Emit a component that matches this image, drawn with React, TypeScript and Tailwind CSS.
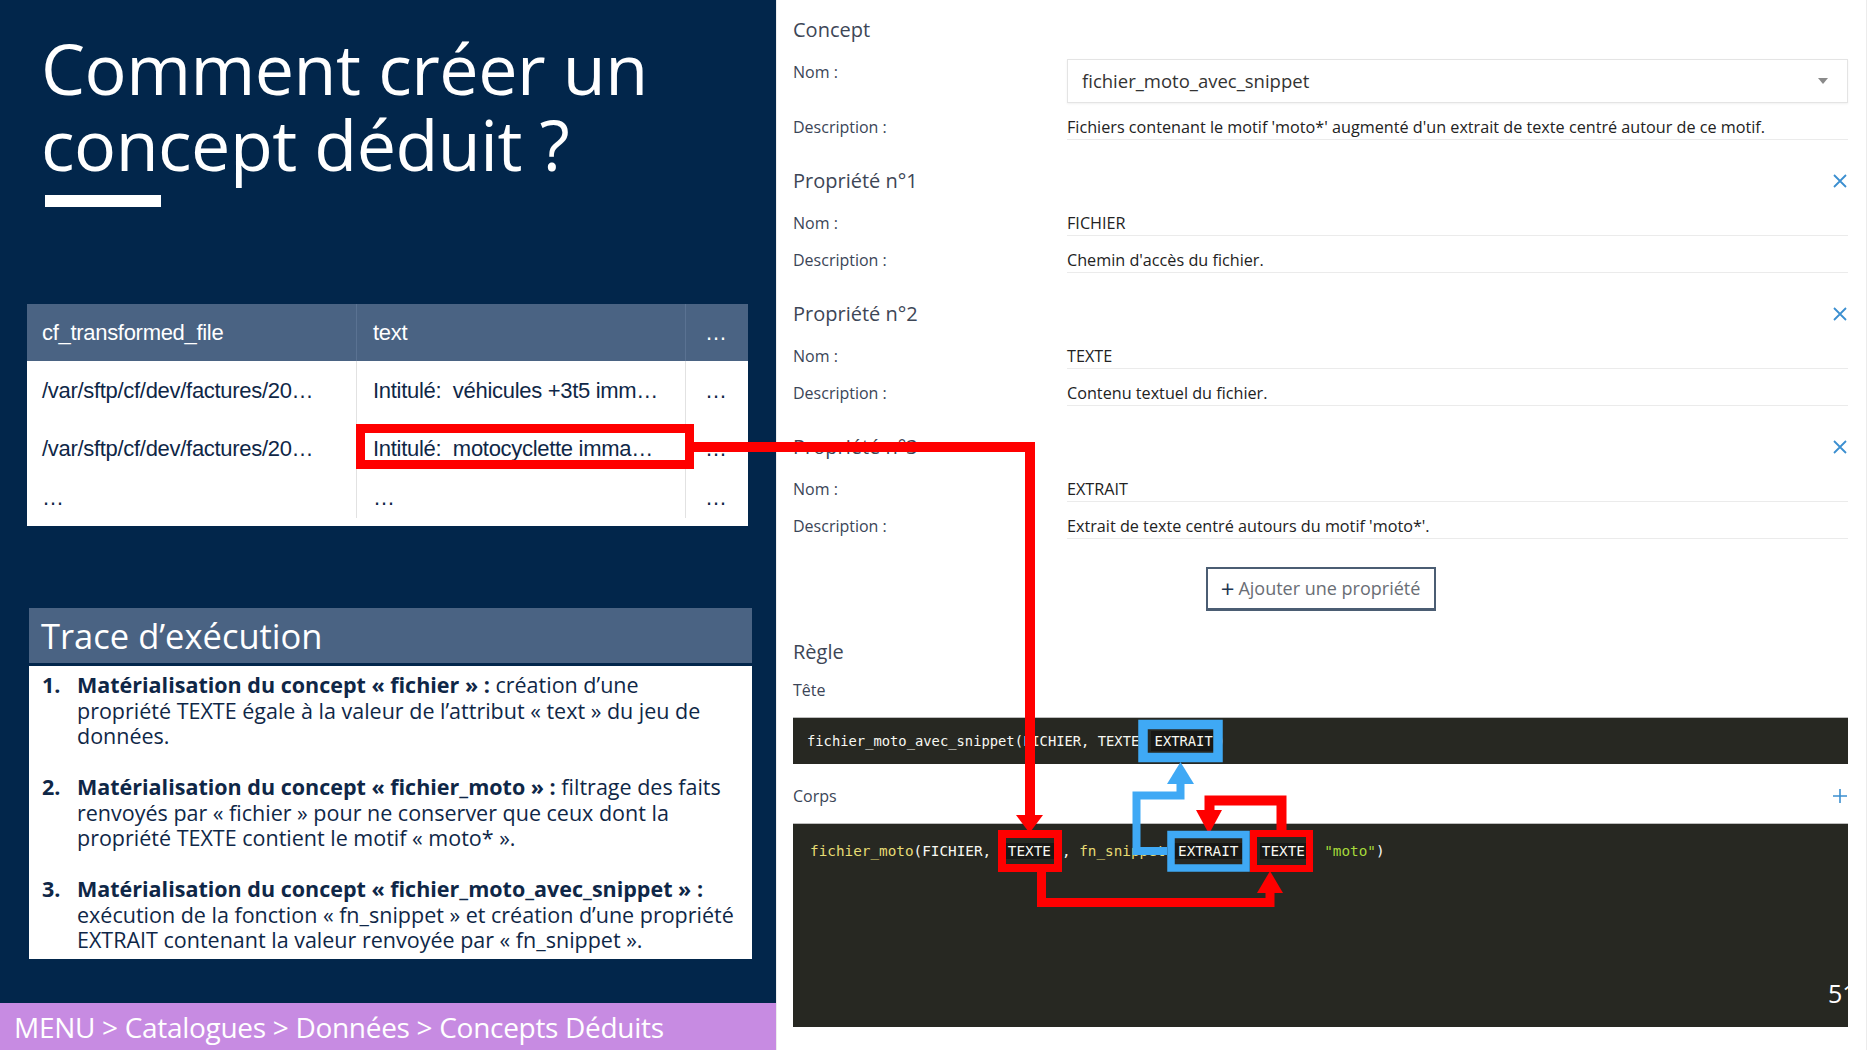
import React from 'react';

const rows = [
  ['/var/sftp/cf/dev/factures/20…', 'Intitulé:  véhicules +3t5 imm…', '…'],
  ['/var/sftp/cf/dev/factures/20…', 'Intitulé:  motocyclette imma…', '…'],
  ['…', '…', '…'],
];

function DataTable() {
  return (
    <div className="ml-[27px] mt-[97px] w-[721px] font-['Liberation_Sans',Arial,sans-serif] text-[22px] tracking-[-0.3px]">
      <div className="flex h-[57px] bg-[#4a6383] text-white">
        <div className="flex w-[329px] items-center pl-[15px]">cf_transformed_file</div>
        <div className="flex w-[329px] items-center border-l border-[#5a7292] pl-[16px]">text</div>
        <div className="flex flex-1 items-center border-l border-[#5a7292] pl-[19px]">…</div>
      </div>
      {rows.map((row, i) => (
        <div
          key={i}
          className={
            i === 2
              ? 'flex h-[49px] bg-white pb-[8px] text-[#0f2747]'
              : 'flex h-[58px] bg-white text-[#0f2747]'
          }
        >
          <div className="flex w-[329px] items-center pl-[15px]">{row[0]}</div>
          <div className="flex w-[329px] items-center border-l border-[#e2e2e2] pl-[16px] whitespace-pre">{row[1]}</div>
          <div className="flex flex-1 items-center border-l border-[#e2e2e2] pl-[19px]">{row[2]}</div>
        </div>
      ))}
    </div>
  );
}

function TraceItem({ n, bold, lines, last }: { n: string; bold: string; lines: React.ReactNode[]; last?: boolean }) {
  return (
    <li className={last ? 'flex' : 'mb-[25.5px] flex'}>
      <span className="w-[35px] shrink-0 font-bold">{n}</span>
      <div>
        <span className="font-bold">{bold}</span>
        {lines.map((l, i) => (
          <React.Fragment key={i}>
            {i > 0 && <br />}
            {l}
          </React.Fragment>
        ))}
      </div>
    </li>
  );
}

function Trace() {
  return (
    <div className="ml-[29px] mt-[82px] w-[723px]">
      <div className="flex h-[55px] items-center bg-[#4a6383] pl-[12px] text-[34.5px] text-white">Trace d’exécution</div>
      <div className="mt-[3px] h-[293px] bg-white pl-[13px] pt-[6px] text-[21.5px] leading-[25.5px] text-[#0f2747]">
        <ol>
          <TraceItem
            n="1."
            bold="Matérialisation du concept « fichier » :"
            lines={[' création d’une', 'propriété TEXTE égale à la valeur de l’attribut « text » du jeu de', 'données.']}
          />
          <TraceItem
            n="2."
            bold="Matérialisation du concept « fichier_moto » :"
            lines={[' filtrage des faits', 'renvoyés par « fichier » pour ne conserver que ceux dont la', 'propriété TEXTE contient le motif « moto* ».']}
          />
          <TraceItem
            n="3."
            bold="Matérialisation du concept « fichier_moto_avec_snippet » :"
            lines={['', 'exécution de la fonction « fn_snippet » et création d’une propriété', 'EXTRAIT contenant la valeur renvoyée par « fn_snippet ».']}
            last
          />
        </ol>
      </div>
    </div>
  );
}

function LeftPanel() {
  return (
    <div className="flex h-full w-[776px] shrink-0 flex-col bg-[#02264b]">
      <h1 className="ml-[41px] mt-[30px] text-[70px] font-normal leading-[76px] tracking-[-0.5px] text-white">
        Comment créer un
        <br />
        concept déduit ?
      </h1>
      <div className="ml-[45px] mt-[13px] h-[12px] w-[116px] bg-white" />
      <DataTable />
      <Trace />
      <div className="mt-auto flex h-[47px] items-center bg-[#c78be2] pl-[14px] text-[28px] tracking-[-0.3px] text-white">
        MENU &gt; Catalogues &gt; Données &gt; Concepts Déduits
      </div>
    </div>
  );
}

function CloseIcon() {
  return (
    <svg width="14" height="14" viewBox="0 0 14 14" className="mr-[1px]">
      <path d="M1 1 L13 13 M13 1 L1 13" stroke="#3b8fd0" strokeWidth="1.8" fill="none" />
    </svg>
  );
}

function Field({ label, value, tall }: { label: string; value: string; tall?: boolean }) {
  return (
    <div className={tall ? 'flex h-[37px] items-end' : 'flex h-[36px] items-end'}>
      <div className="w-[274px] pb-[1px] text-[16px] leading-[24px] text-[#3b4557]">{label}</div>
      <div className="flex-1 border-b border-[#ebebeb] text-[16.2px] leading-[24px] text-[#222]">{value}</div>
    </div>
  );
}

function Property({ n, name, desc }: { n: string; name: string; desc: string }) {
  return (
    <div>
      <div className="flex h-[60px] items-center justify-between pt-[22px] text-[20px] text-[#3d4656]">
        <span>Propriété n°{n}</span>
        <CloseIcon />
      </div>
      <Field label="Nom :" value={name} />
      <Field label="Description :" value={desc} tall />
    </div>
  );
}

const hl = 'bg-[#181816] px-[4px]';

function RightPanel() {
  return (
    <div className="flex h-full flex-1 flex-col border-l border-r border-[#ececec] pl-[16px] pr-[18px]">
      <div className="flex h-[59px] items-center text-[20px] text-[#3d4656]">Concept</div>
      <div className="flex h-[44px]">
        <div className="w-[274px] text-[16px] leading-[26px] text-[#3b4557]">Nom :</div>
        <div className="flex flex-1 items-center justify-between border border-[#e4e4e4] pl-[14px] pr-[19px] text-[18.5px] text-[#333] shadow-[0_1px_2px_rgba(0,0,0,0.06)]">
          <span>fichier_moto_avec_snippet</span>
          <svg width="10" height="6" viewBox="0 0 10 6">
            <path d="M0 0 L10 0 L5 6 Z" fill="#8a8a8a" />
          </svg>
        </div>
      </div>
      <Field
        label="Description :"
        value="Fichiers contenant le motif 'moto*' augmenté d'un extrait de texte centré autour de ce motif."
        tall
      />
      <Property n="1" name="FICHIER" desc="Chemin d'accès du fichier." />
      <Property n="2" name="TEXTE" desc="Contenu textuel du fichier." />
      <Property n="3" name="EXTRAIT" desc="Extrait de texte centré autours du motif 'moto*'." />

      <div className="mt-[28px] flex justify-center">
        <button className="flex h-[44px] w-[230px] items-center justify-center gap-[4px] border-2 border-b-[3px] border-[#4b5d73] bg-white text-[18px] text-[#6a6e75]">
          <span className="text-[24px] leading-none text-[#1f3550]">+</span>
          <span>Ajouter une propriété</span>
        </button>
      </div>

      <div className="flex h-[60px] items-center pt-[22px] text-[20px] text-[#3d4656]">Règle</div>
      <div className="flex h-[38px] items-center text-[16px] text-[#3b4557]">Tête</div>
      <div className="mt-[8px] flex h-[47px] items-center border-t border-[#bdbdbd] bg-[#272822] pl-[14px] font-['DejaVu_Sans_Mono',monospace] text-[13.8px] whitespace-pre text-[#f8f8f2]">
        <span>fichier_moto_avec_snippet(FICHIER, TEXTE,</span>
        <span className={`ml-[3px] ${hl}`}>EXTRAIT</span>
        <span>)</span>
      </div>
      <div className="flex h-[59px] items-center justify-between pt-[5px] text-[16px] text-[#3b4557]">
        <span>Corps</span>
        <svg width="14" height="14" viewBox="0 0 14 14" className="mr-[1px]">
          <path d="M7 0 V14 M0 7 H14" stroke="#3b8fd0" strokeWidth="1.6" fill="none" />
        </svg>
      </div>
      <div className="relative h-[204px] overflow-hidden border-t border-[#bdbdbd] bg-[#272822] pl-[17px] pt-[17px] font-['DejaVu_Sans_Mono',monospace] text-[14.33px] leading-[20px] whitespace-pre text-[#f8f8f2]">
        <span className="text-[#e6db74]">fichier_moto</span>
        <span>(FICHIER, </span>
        <span className={`ml-[4px] ${hl}`}>TEXTE</span>
        <span className="ml-[7px]">, </span>
        <span className="text-[#e6db74]">fn_snippet</span>
        <span>(</span>
        <span className={hl}>EXTRAIT</span>
        <span>, </span>
        <span className="bg-[#181816] px-[2px]">TEXTE</span>
        <span>, </span>
        <span className="text-[#a6d93a]">"moto"</span>
        <span>)</span>
        <span className="absolute left-[1035px] top-[152px] font-['Open_Sans',sans-serif] text-[25px] leading-[34px] text-white">51</span>
      </div>
    </div>
  );
}

function Annotations() {
  const red = '#ff0000';
  const blue = '#3fa9f5';
  return (
    <svg className="pointer-events-none absolute left-0 top-0" width="1867" height="1050" viewBox="0 0 1867 1050">
      {/* cellule du tableau -> TEXTE du corps */}
      <rect x="360.5" y="428.5" width="329" height="36" fill="none" stroke={red} strokeWidth="9" />
      <polyline points="694,447 1030,447 1030,816" fill="none" stroke={red} strokeWidth="10" />
      <polygon points="1016,815 1043,815 1029.5,833" fill={red} />
      <rect x="1002" y="834" width="56" height="34" fill="none" stroke={red} strokeWidth="8" />
      <polyline points="1041.5,872 1041.5,902.5 1270,902.5 1270,892" fill="none" stroke={red} strokeWidth="9" />
      <polygon points="1257,893 1283,893 1270,871" fill={red} />
      <rect x="1253.5" y="833.5" width="56" height="35" fill="none" stroke={red} strokeWidth="7" />
      <polyline points="1281.5,830 1281.5,800.5 1209.5,800.5 1209.5,811" fill="none" stroke={red} strokeWidth="10" />
      <polygon points="1196,810 1222,810 1209,834" fill={red} />
      {/* EXTRAIT corps -> EXTRAIT tête */}
      <rect x="1143" y="724.5" width="75" height="33" fill="none" stroke={blue} strokeWidth="9.5" />
      <rect x="1171" y="834.5" width="75" height="33.5" fill="none" stroke={blue} strokeWidth="7.5" />
      <polyline points="1167,851 1136.5,851 1136.5,795.5 1180.5,795.5 1180.5,784" fill="none" stroke={blue} strokeWidth="8" />
      <polygon points="1167,784 1194,784 1180.5,762" fill={blue} />
    </svg>
  );
}

export default function App() {
  return (
    <div className="relative flex h-[1050px] w-[1867px] overflow-hidden bg-white font-['Open_Sans',sans-serif]">
      <LeftPanel />
      <RightPanel />
      <Annotations />
    </div>
  );
}
